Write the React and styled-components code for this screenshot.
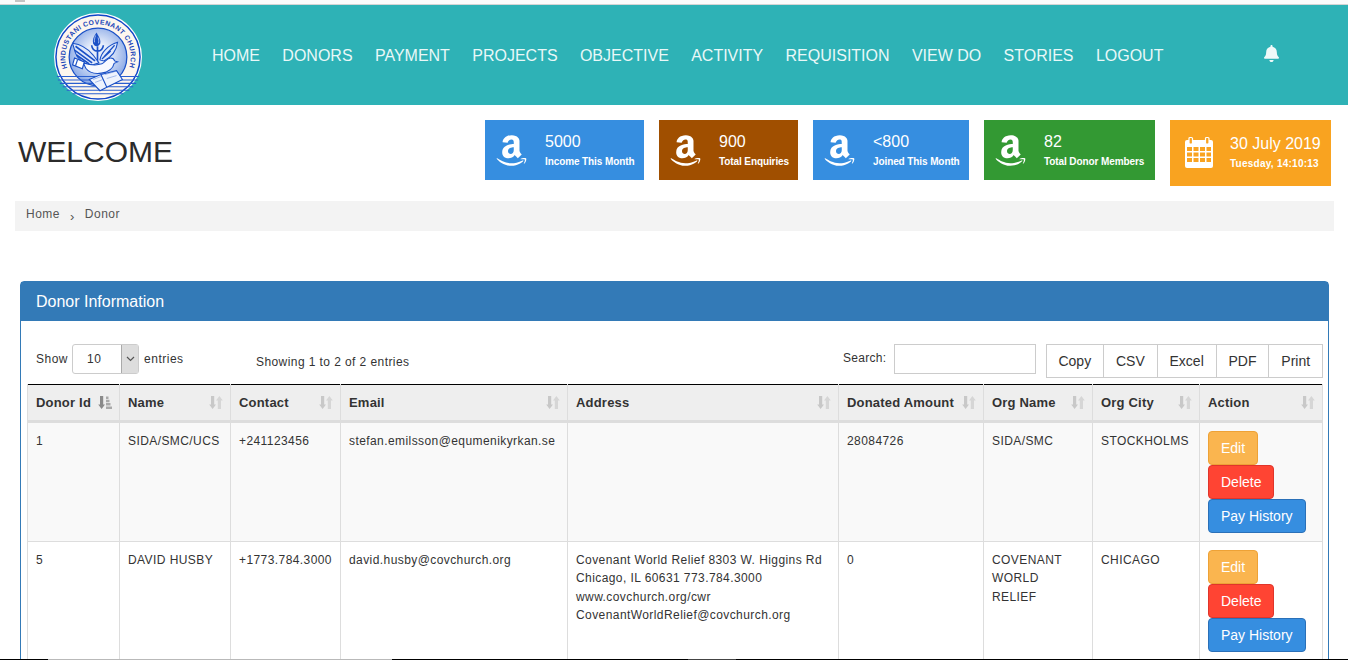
import React from "react";
import styled, { createGlobalStyle } from "styled-components";
import { FaAmazon, FaBell } from "react-icons/fa";

const GlobalStyle = createGlobalStyle`
  html, body {
    margin: 0;
    padding: 0;
    height: 660px;
    overflow: hidden;
    background: #fff;
  }
  * {
    box-sizing: border-box;
  }
  body {
    font-family: "Liberation Sans", Arial, sans-serif;
    font-size: 12px;
    color: #333;
  }
`;

const NAV = ["HOME", "DONORS", "PAYMENT", "PROJECTS", "OBJECTIVE", "ACTIVITY", "REQUISITION", "VIEW DO", "STORIES", "LOGOUT"];

const STATS = [
  { value: "5000", label: "Income This Month", color: "#368ee0", width: 159 },
  { value: "900", label: "Total Enquiries", color: "#a04f00", width: 139 },
  { value: "<800", label: "Joined This Month", color: "#368ee0", width: 156 },
  { value: "82", label: "Total Donor Members", color: "#339933", width: 171 },
];

const COLUMNS = [
  { title: "Donor Id", width: 92, sorted: true },
  { title: "Name", width: 111 },
  { title: "Contact", width: 110 },
  { title: "Email", width: 227 },
  { title: "Address", width: 271 },
  { title: "Donated Amount", width: 145 },
  { title: "Org Name", width: 109 },
  { title: "Org City", width: 107 },
  { title: "Action", width: 123 },
];

const ROWS = [
  {
    id: "1",
    name: "SIDA/SMC/UCS",
    contact: "+241123456",
    email: "stefan.emilsson@equmenikyrkan.se",
    address: "",
    amount: "28084726",
    org: "SIDA/SMC",
    city: "STOCKHOLMS",
  },
  {
    id: "5",
    name: "DAVID HUSBY",
    contact: "+1773.784.3000",
    email: "david.husby@covchurch.org",
    address: "Covenant World Relief 8303 W. Higgins Rd Chicago, IL 60631 773.784.3000 www.covchurch.org/cwr CovenantWorldRelief@covchurch.org",
    amount: "0",
    org: "COVENANT WORLD RELIEF",
    city: "CHICAGO",
  },
];

// black and grey pieces of the screenshot's bottom edge
const EDGE = [
  { color: "#000", width: 48 },
  { color: "#b9b9b9", width: 344 },
  { color: "#000", width: 296 },
  { color: "#444", width: 48 },
  { color: "#000", width: 612 },
];

function Logo() {
  return (
    <svg width="88" height="88" viewBox="0 0 90 90">
      <defs>
        <path id="ringText" d="M 13.5 56.5 A 33.5 33.5 0 1 1 76.5 56.5" />
        <radialGradient id="innerFill" cx="50%" cy="45%" r="55%">
          <stop offset="35%" stopColor="#e6edfa" />
          <stop offset="100%" stopColor="#86a6e6" />
        </radialGradient>
      </defs>
      <circle cx="45" cy="45" r="45" fill="#fff" />
      <circle cx="45" cy="45" r="43" fill="#fdf6ee" stroke="#0f45c8" strokeWidth="1.5" />
      <circle cx="45" cy="45" r="29.5" fill="url(#innerFill)" stroke="#1a50c6" strokeWidth="1.3" />
      <text fontFamily="Liberation Sans, sans-serif" fontSize="7" fontWeight="700" fill="#1a45b8">
        <textPath href="#ringText" textLength="127" lengthAdjust="spacing">HINDUSTANI COVENANT CHURCH</textPath>
      </text>
      {/* water */}
      <path d="M3 65H87M4 68.5H86M6 72H84M9 75.5H81M13 79H77M19 82.5H71" stroke="#2a5fd0" strokeWidth="1.1" />
      {/* torch */}
      <path d="M43.5 20c-3 4-4.5 8-3.5 11 .7 2 2 3 3.5 3s3.200-1 3.800-3c.8-3-1.500-7-3.800-11z" fill="#1a50c6" />
      <path d="M42.500 23c-1 3-1.500 5-1 7M45 25c.8 2 1 4 .5 6" stroke="#dfe8fb" strokeWidth=".7" fill="none" />
      <path d="M38.500 33c.5 4 3 6 6 6s5.500-2 6-6M44.500 34v16" fill="none" stroke="#1a50c6" strokeWidth="1.7" />
      {/* wings */}
      <path d="M19 31c8 1 16 6 21 12l6 8-9 3c-7-3-13-7-15-13z" fill="#dfe8fb" stroke="#1a50c6" strokeWidth="1.1" />
      <path d="M22 34l20 15M21 38l18 13M23 43l13 9" stroke="#1a50c6" strokeWidth="1.7" />
      <path d="M47 48c1-7 8-15 18-18-1 8-6 15-14 19z" fill="#dfe8fb" stroke="#1a50c6" strokeWidth="1.1" />
      <path d="M51 45l11-12M49 47l9-8" stroke="#1a50c6" strokeWidth="1.3" />
      {/* body and head */}
      <path d="M30 51c6 2 13 3 19 1 3-1 5-6 9-6 2 0 3.500 1 4 3l3 1-3.500 1.500c-1 5-6 9-13 10-7 1-13-1-16-5z" fill="#f7f9ff" stroke="#1a50c6" strokeWidth="1.1" />
      {/* tail */}
      <path d="M21 46l10 4-2 7-10-4z" fill="#fff" stroke="#1a50c6" strokeWidth="1.2" />
      <path d="M24 48l-2 6" stroke="#1a50c6" strokeWidth="1.2" />
      {/* book */}
      <path d="M36 68l12-5 6 13-7 3.500zM48 63l16-4 6 9-16 8z" fill="#eef3fd" stroke="#1a50c6" strokeWidth="1.1" />
      <path d="M40 68l8-3M42 71l8-3M52 63l10-3M54 67l10-3" stroke="#6f93de" strokeWidth=".6" />
    </svg>
  );
}

function CalendarIcon() {
  return (
    <svg width="28" height="32" viewBox="0 0 28 32">
      <path d="M2 4h24a2 2 0 0 1 2 2v24a2 2 0 0 1-2 2H2a2 2 0 0 1-2-2V6a2 2 0 0 1 2-2z" fill="#fff" />
      <path d="M5 1.500h1.500a1 1 0 0 1 1 1V7a1 1 0 0 1-1 1H5a1 1 0 0 1-1-1V2.500a1 1 0 0 1 1-1zM21.500 1.500H23a1 1 0 0 1 1 1V7a1 1 0 0 1-1 1h-1.500a1 1 0 0 1-1-1V2.500a1 1 0 0 1 1-1z" fill="#f9a320" stroke="#fff" strokeWidth="1.200" />
      <path d="M2 11h5v4H2zM8.500 11h5v4h-5zM15 11h5v4h-5zM21.500 11H26v4h-4.500zM2 16.500h5v4H2zM8.500 16.500h5v4h-5zM15 16.500h5v4h-5zM21.500 16.500H26v4h-4.500zM2 22h5v4H2zM8.500 22h5v4h-5zM15 22h5v4h-5zM21.500 22H26v4h-4.500z" fill="#f9a320" />
    </svg>
  );
}

function SortIcon({ sorted }) {
  if (sorted) {
    return (
      <SortSvg width="14" height="13" viewBox="0 0 14 13">
        <path d="M2 0h3.200v8.500h1.800L3.600 13 .2 8.500H2z" fill="#8a8a8a" />
        <path d="M8 .5h2.500V3H8zM8 3.800h3.500v2.400H8zM8 7h4.500v2.500H8zM8 10.500h6V13H8z" fill="#a9a9a9" />
      </SortSvg>
    );
  }
  return (
    <SortSvg width="14" height="13" viewBox="0 0 14 13">
      <path d="M2 0h3.200v8.500h1.800L3.600 13 .2 8.500H2z" fill="#c8c8c8" />
      <path d="M10.400 0l3.400 4.500H12V13H8.800V4.500H7z" fill="#d6d6d6" />
    </SortSvg>
  );
}

export default function App() {
  return (
    <Page>
      <GlobalStyle />
      <TopStrip />
      <Header>
        <LogoSlot>
          <Logo />
        </LogoSlot>
        <Nav>
          {NAV.map((item) => (
            <NavLink key={item}>{item}</NavLink>
          ))}
        </Nav>
        <BellSlot>
          <FaBell size={17} />
        </BellSlot>
      </Header>

      <TitleRow>
        <Welcome>WELCOME</Welcome>
        <Stats>
          {STATS.map((stat) => (
            <StatCard key={stat.label} $color={stat.color} $width={stat.width}>
              <FaAmazon size={35} />
              <StatText>
                <StatValue>{stat.value}</StatValue>
                <StatLabel>{stat.label}</StatLabel>
              </StatText>
            </StatCard>
          ))}
          <DateCard>
            <CalendarIcon />
            <StatText>
              <StatValue>30 July 2019</StatValue>
              <DateLabel>Tuesday, 14:10:13</DateLabel>
            </StatText>
          </DateCard>
        </Stats>
      </TitleRow>

      <Breadcrumb>
        <span>Home</span>
        <Chevron>›</Chevron>
        <span>Donor</span>
      </Breadcrumb>

      <Panel>
        <PanelHeading>Donor Information</PanelHeading>
        <PanelBody>
          <Toolbar>
            <LengthControl>
              <span>Show</span>
              <FakeSelect>
                <SelectValue>10</SelectValue>
                <SelectArrow>
                  <svg width="9" height="6" viewBox="0 0 9 6">
                    <path d="M1 1l3.500 3.500L8 1" fill="none" stroke="#555" strokeWidth="1.200" />
                  </svg>
                </SelectArrow>
              </FakeSelect>
              <span>entries</span>
            </LengthControl>
            <Info>Showing 1 to 2 of 2 entries</Info>
            <SearchLabel>
              Search:
              <SearchInput type="text" />
            </SearchLabel>
            <ExportGroup>
              {["Copy", "CSV", "Excel", "PDF", "Print"].map((name) => (
                <ExportButton key={name}>{name}</ExportButton>
              ))}
            </ExportGroup>
          </Toolbar>

          <Table>
            <colgroup>
              {COLUMNS.map((col) => (
                <col key={col.title} style={{ width: col.width }} />
              ))}
            </colgroup>
            <thead>
              <tr>
                {COLUMNS.map((col) => (
                  <HeadCell key={col.title}>
                    <HeadInner>
                      {col.title}
                      <SortIcon sorted={col.sorted} />
                    </HeadInner>
                  </HeadCell>
                ))}
              </tr>
            </thead>
            <tbody>
              {ROWS.map((row, i) => (
                <Row key={row.id} $odd={i % 2 === 0}>
                  <Cell>{row.id}</Cell>
                  <Cell>{row.name}</Cell>
                  <Cell>{row.contact}</Cell>
                  <Cell>{row.email}</Cell>
                  <Cell>{row.address}</Cell>
                  <Cell>{row.amount}</Cell>
                  <Cell>{row.org}</Cell>
                  <Cell>{row.city}</Cell>
                  <ActionCell>
                    <ActionButton $bg="#fab54f" $border="#eea236">Edit</ActionButton>
                    <ActionButton $bg="#ff4433" $border="#e0352b">Delete</ActionButton>
                    <ActionButton $bg="#368ee0" $border="#2a70b8">Pay History</ActionButton>
                  </ActionCell>
                </Row>
              ))}
            </tbody>
          </Table>
        </PanelBody>
      </Panel>

      <BottomEdge>
        {EDGE.map((piece, i) => (
          <EdgePiece key={i} $color={piece.color} $width={piece.width} />
        ))}
      </BottomEdge>
    </Page>
  );
}

const Page = styled.div`
  width: 1348px;
  height: 660px;
  overflow: hidden;
  position: relative;
`;

const TopStrip = styled.div`
  height: 5px;
  background: #fbfbfb;
  border-bottom: 1px solid #d4d4d4;
  position: relative;
  &::before {
    content: "";
    position: absolute;
    left: 15px;
    top: 0;
    width: 10px;
    height: 2px;
    background: #c4c4c4;
  }
`;

const Header = styled.header`
  height: 100px;
  background: #2eb2b6;
  display: flex;
  align-items: center;
`;

const LogoSlot = styled.div`
  width: 212px;
  padding: 3px 0 0 54px;
  display: flex;
`;

const Nav = styled.nav`
  display: flex;
  gap: 22.35px;
  width: 1042px;
  margin-top: 1px;
`;

const NavLink = styled.a`
  color: #e9f8f8;
  font-size: 16px;
  line-height: 20px;
`;

const BellSlot = styled.div`
  color: #eef9f9;
  display: flex;
  margin: -4px 0 0 9px;
`;

const TitleRow = styled.div`
  display: flex;
  justify-content: space-between;
  align-items: flex-start;
  padding: 15px 17px 15px 18px;
  height: 96px;
`;

const Welcome = styled.h1`
  margin: 15px 0 0;
  font-size: 30px;
  line-height: 34px;
  font-weight: 400;
  color: #2b2b2b;
`;

const Stats = styled.div`
  display: flex;
  gap: 15px;
`;

const StatCard = styled.div`
  width: ${(p) => p.$width}px;
  height: 60px;
  background: ${(p) => p.$color};
  color: #fff;
  display: flex;
  align-items: center;
  gap: 16px;
  padding-left: 9px;
`;

const DateCard = styled(StatCard)`
  width: 161px;
  height: 66px;
  background: #f9a320;
  gap: 17px;
  padding: 0 0 2px 15px;
`;

const StatText = styled.div`
  display: flex;
  flex-direction: column;
  gap: 3px;
`;

const StatValue = styled.div`
  font-size: 16px;
  line-height: 20px;
`;

const StatLabel = styled.div`
  font-size: 10px;
  line-height: 14px;
  font-weight: 700;
  letter-spacing: -0.1px;
  white-space: nowrap;
`;

const DateLabel = styled(StatLabel)`
  letter-spacing: 0.25px;
`;

const Breadcrumb = styled.div`
  margin: 0 14px 0 15px;
  height: 30px;
  background: #f3f3f3;
  padding: 0 11px 5px;
  display: flex;
  align-items: center;
  gap: 10px;
  font-size: 12px;
  letter-spacing: 0.5px;
  color: #555;
`;

const Chevron = styled.span`
  font-size: 13px;
  margin-top: 5px;
`;

const Panel = styled.section`
  margin: 50px 19px 0 20px;
  border: 1px solid #337ab7;
  border-radius: 4px 4px 0 0;
`;

const PanelHeading = styled.div`
  height: 39px;
  background: #337ab7;
  color: #fff;
  font-size: 16px;
  line-height: 39px;
  padding-left: 15px;
`;

const PanelBody = styled.div`
  padding: 23px 5px 0 6px;
`;

const Toolbar = styled.div`
  display: flex;
  align-items: flex-start;
  height: 40px;
  letter-spacing: 0.5px;
`;

const LengthControl = styled.div`
  display: flex;
  align-items: center;
  gap: 5px;
  width: 229px;
  flex-shrink: 0;
  padding-left: 9px;
  height: 30px;
`;

const FakeSelect = styled.div`
  width: 67px;
  height: 30px;
  margin-left: -1px;
  border: 1px solid #ccc;
  border-radius: 3px;
  display: flex;
  align-items: stretch;
`;

const SelectValue = styled.div`
  flex: 1;
  padding-left: 14px;
  line-height: 28px;
`;

const SelectArrow = styled.div`
  width: 17px;
  background: #ddd;
  border-left: 1px solid #aaa;
  display: flex;
  align-items: center;
  justify-content: center;
`;

const Info = styled.div`
  width: 587px;
  flex-shrink: 0;
  padding-top: 10px;
  line-height: 16px;
  letter-spacing: 0.42px;
`;

const SearchLabel = styled.label`
  display: flex;
  align-items: flex-start;
  gap: 8px;
  line-height: 28px;
  width: 194px;
  flex-shrink: 0;
  letter-spacing: 0.3px;
`;

const SearchInput = styled.input`
  width: 142px;
  height: 30px;
  border: 1px solid #ccc;
  padding: 0 6px;
  outline: none;
`;

const ExportGroup = styled.div`
  display: flex;
  margin-left: auto;
  height: 34px;
`;

const ExportButton = styled.button`
  height: 34px;
  padding: 0 11.9px;
  background: #fff;
  border: 1px solid #ccc;
  margin-left: -1px;
  font-family: inherit;
  font-size: 14px;
  color: #333;
  &:first-child {
    margin-left: 0;
  }
`;

const Table = styled.table`
  table-layout: fixed;
  width: 1295px;
  border-collapse: collapse;
  border-top: 1px solid #000;
  letter-spacing: 0.42px;
`;

const HeadCell = styled.th`
  background: #eee;
  border: 1px solid #ddd;
  border-top: 0;
  border-bottom: 3px solid #ddd;
  padding: 0 8px;
  height: 37px;
  text-align: left;
  font-weight: 700;
  font-size: 13px;
  letter-spacing: 0.2px;
  color: #333;
`;

const HeadInner = styled.div`
  display: flex;
  align-items: center;
  justify-content: space-between;
`;

const SortSvg = styled.svg`
  flex-shrink: 0;
  margin-right: -1px;
`;

const Row = styled.tr`
  background: ${(p) => (p.$odd ? "#f9f9f9" : "#fff")};
`;

const Cell = styled.td`
  border: 1px solid #ddd;
  padding: 8.5px 8px 8px;
  vertical-align: top;
  line-height: 18.5px;
  color: #333;
`;

const ActionCell = styled(Cell)`
  padding-top: 8px;
`;

const ActionButton = styled.button`
  display: block;
  height: 34px;
  padding: 0 12px;
  background: ${(p) => p.$bg};
  border: 1px solid ${(p) => p.$border};
  border-radius: 4px;
  color: #fff;
  font-family: inherit;
  font-size: 14px;
`;

const BottomEdge = styled.div`
  position: absolute;
  left: 0;
  bottom: 0;
  width: 100%;
  height: 1px;
  display: flex;
`;

const EdgePiece = styled.div`
  width: ${(p) => p.$width}px;
  background: ${(p) => p.$color};
`;
